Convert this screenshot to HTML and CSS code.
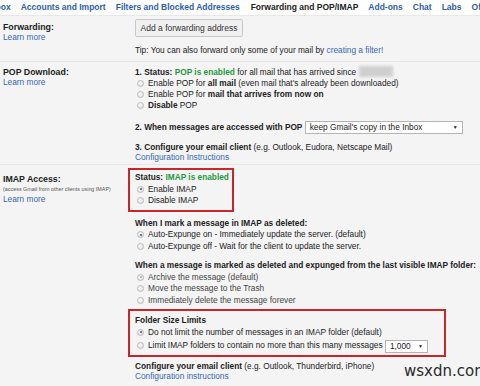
FILE: index.html
```html
<!DOCTYPE html>
<html lang="en">
<head>
    <meta charset="UTF-8">
    <meta name="viewport" content="width=device-width, initial-scale=1.0">
    <title>Settings - Forwarding and POP/IMAP</title>
    <link rel="stylesheet" href="styles.css">
</head>
<body>
    <div class="tabs">
        <a class="tab first">Inbox</a>
        <a class="tab">Accounts and Import</a>
        <a class="tab">Filters and Blocked Addresses</a>
        <a class="tab active">Forwarding and POP/IMAP</a>
        <a class="tab">Add-ons</a>
        <a class="tab">Chat</a>
        <a class="tab">Labs</a>
        <a class="tab">Offline</a>
    </div>

    <div class="row row-forward">
        <div class="label">
            <b>Forwarding:</b>
            <a class="link">Learn more</a>
        </div>
        <div class="content">
            <button class="btn">Add a forwarding address</button>
            <p class="tip">Tip: You can also forward only some of your mail by <a class="link">creating a filter!</a></p>
        </div>
    </div>

    <div class="row row-pop">
        <div class="label">
            <b>POP Download:</b>
            <a class="link">Learn more</a>
        </div>
        <div class="content">
            <div class="line"><b>1. Status: <span class="ok">POP is enabled</span></b> for all mail that has arrived since <span class="blur"></span></div>
            <div class="line"><span class="radio"></span>Enable POP for <b>all mail</b> (even mail that's already been downloaded)</div>
            <div class="line"><span class="radio"></span>Enable POP for <b>mail that arrives from now on</b></div>
            <div class="line"><span class="radio"></span><b>Disable</b> POP</div>

            <div class="line step2"><b>2. When messages are accessed with POP</b>
                <span class="select wide">keep Gmail's copy in the Inbox<i class="arrow">&#9660;</i></span>
            </div>

            <div class="line step3"><b>3. Configure your email client</b> (e.g. Outlook, Eudora, Netscape Mail)</div>
            <a class="link config">Configuration Instructions</a>
        </div>
    </div>

    <div class="row row-imap">
        <div class="label">
            <b>IMAP Access:</b>
            <span class="small">(access Gmail from other clients using IMAP)</span>
            <a class="link">Learn more</a>
        </div>
        <div class="content">
            <div class="boxed status">
                <div class="line"><b>Status: <span class="ok">IMAP is enabled</span></b></div>
                <div class="line"><span class="radio on"></span>Enable IMAP</div>
                <div class="line"><span class="radio"></span>Disable IMAP</div>
            </div>

            <div class="group deleted">
                <div class="line"><b>When I mark a message in IMAP as deleted:</b></div>
                <div class="line"><span class="radio on"></span>Auto-Expunge on - Immediately update the server. (default)</div>
                <div class="line"><span class="radio"></span>Auto-Expunge off - Wait for the client to update the server.</div>
            </div>

            <div class="group expunged">
                <div class="line"><b>When a message is marked as deleted and expunged from the last visible IMAP folder:</b></div>
                <div class="line faded"><span class="radio on dim"></span>Archive the message (default)</div>
                <div class="line faded"><span class="radio"></span>Move the message to the Trash</div>
                <div class="line faded"><span class="radio"></span>Immediately delete the message forever</div>
            </div>

            <div class="boxed folder">
                <div class="line"><b>Folder Size Limits</b></div>
                <div class="line"><span class="radio on"></span>Do not limit the number of messages in an IMAP folder (default)</div>
                <div class="line limit"><span class="radio"></span>Limit IMAP folders to contain no more than this many messages
                    <span class="select narrow">1,000<i class="arrow">&#9660;</i></span>
                </div>
            </div>

            <div class="line client"><b>Configure your email client</b> (e.g. Outlook, Thunderbird, iPhone)</div>
            <a class="link config">Configuration instructions</a>
        </div>
    </div>

    <div class="watermark">wsxdn.com</div>
</body>
</html>
```

FILE: styles.css
```css
body {
    margin: 0;
    background: #f4f4f4;
    font-family: "Liberation Sans", Arial, sans-serif;
    font-size: 8.3px;
    color: #222;
    overflow: hidden;
    position: relative;
    height: 386px;
}
b {
    font-weight: bold;
}
.tabs {
    display: flex;
    gap: 10px;
    height: 15px;
    line-height: 15px;
    background: #fff;
    white-space: nowrap;
    overflow: hidden;
    border-bottom: 1px solid #e8e8e8;
    font-size: 8.5px;
}
.tab {
    color: #2d5ead;
    font-weight: bold;
    flex: none;
}
.tab.first {
    margin-left: -12px;
}
.tab.active {
    color: #222;
    margin-left: 1px;
}
.link {
    color: #3568b8;
    display: block;
}
.tip .link {
    display: inline;
}
.row {
    display: grid;
    grid-template-columns: 132px 1fr;
    padding-left: 3px;
    border-bottom: 1px solid #e6e6e6;
}
.label {
    display: flex;
    flex-direction: column;
    line-height: 10px;
}
.label b {
    font-size: 8.8px;
}
.small {
    font-size: 5.4px;
    line-height: 10px;
    color: #555;
}
.line {
    line-height: 11px;
    display: block;
    white-space: nowrap;
}
.row-forward {
    padding-top: 3px;
    padding-bottom: 5px;
}
.row-forward .label {
    padding-top: 3px;
}
.btn {
    font-family: inherit;
    font-size: 8.5px;
    color: #333;
    height: 18px;
    width: 108px;
    padding: 0;
    background: #f0f0f0;
    border: 1px solid #c8c8c8;
    border-radius: 2px;
}
.tip {
    margin: 8px 0 0;
    line-height: 11px;
}
.row-pop {
    padding-top: 4px;
    padding-bottom: 2px;
}
.row-pop .label {
    padding-top: 1px;
}
.ok {
    color: #1e9a3c;
}
.blur {
    display: inline-block;
    width: 34px;
    height: 11px;
    vertical-align: -2px;
    background: #cfcfcf;
    filter: blur(1.5px);
}
.radio {
    display: inline-block;
    width: 7px;
    height: 7px;
    margin: 0 4px 0 2px;
    vertical-align: -1px;
    border: 1px solid #b9b9b9;
    border-radius: 50%;
    background: radial-gradient(circle at 40% 35%, #fafafa, #dedede);
    box-sizing: border-box;
    position: relative;
}
.radio.on::after {
    content: "";
    position: absolute;
    left: 1.5px;
    top: 1.5px;
    width: 2px;
    height: 2px;
    border-radius: 50%;
    background: #555;
}
.radio.dim::after {
    background: #aaa;
}
.faded {
    color: #444;
}
.step2 {
    margin-top: 9px;
    line-height: 14px;
}
.select {
    display: inline-flex;
    justify-content: space-between;
    align-items: center;
    height: 13px;
    padding: 0 4px;
    background: #fff;
    border: 1px solid #b5b5b5;
    box-sizing: border-box;
    vertical-align: middle;
    font-weight: normal;
    line-height: 11px;
}
.select.wide {
    width: 158px;
}
.select.narrow {
    width: 43px;
}
.arrow {
    font-style: normal;
    font-size: 5px;
    color: #222;
}
.step3 {
    margin-top: 8px;
}
.config {
    line-height: 9px;
}
.row-imap {
    padding-top: 3px;
    border-bottom: none;
}
.row-imap .label {
    padding-top: 6px;
}
.row-imap .line {
    line-height: 11.5px;
}
.boxed {
    margin-left: -7px;
    padding: 2px 3px 3px 5px;
    border: 2px solid #c9262c;
    width: fit-content;
}
.deleted {
    margin-top: 6px;
}
.expunged {
    margin-top: 8px;
}
.folder {
    padding: 4px 16px 2px 5px;
    margin-top: 3px;
}
.row-imap .limit {
    line-height: 14px;
}
.client {
    margin-top: 4px;
}
.watermark {
    position: absolute;
    left: 404px;
    top: 362px;
    font-size: 15px;
    line-height: 18px;
    color: #2a2a2a;
    font-family: "DejaVu Sans", sans-serif;
}
```
